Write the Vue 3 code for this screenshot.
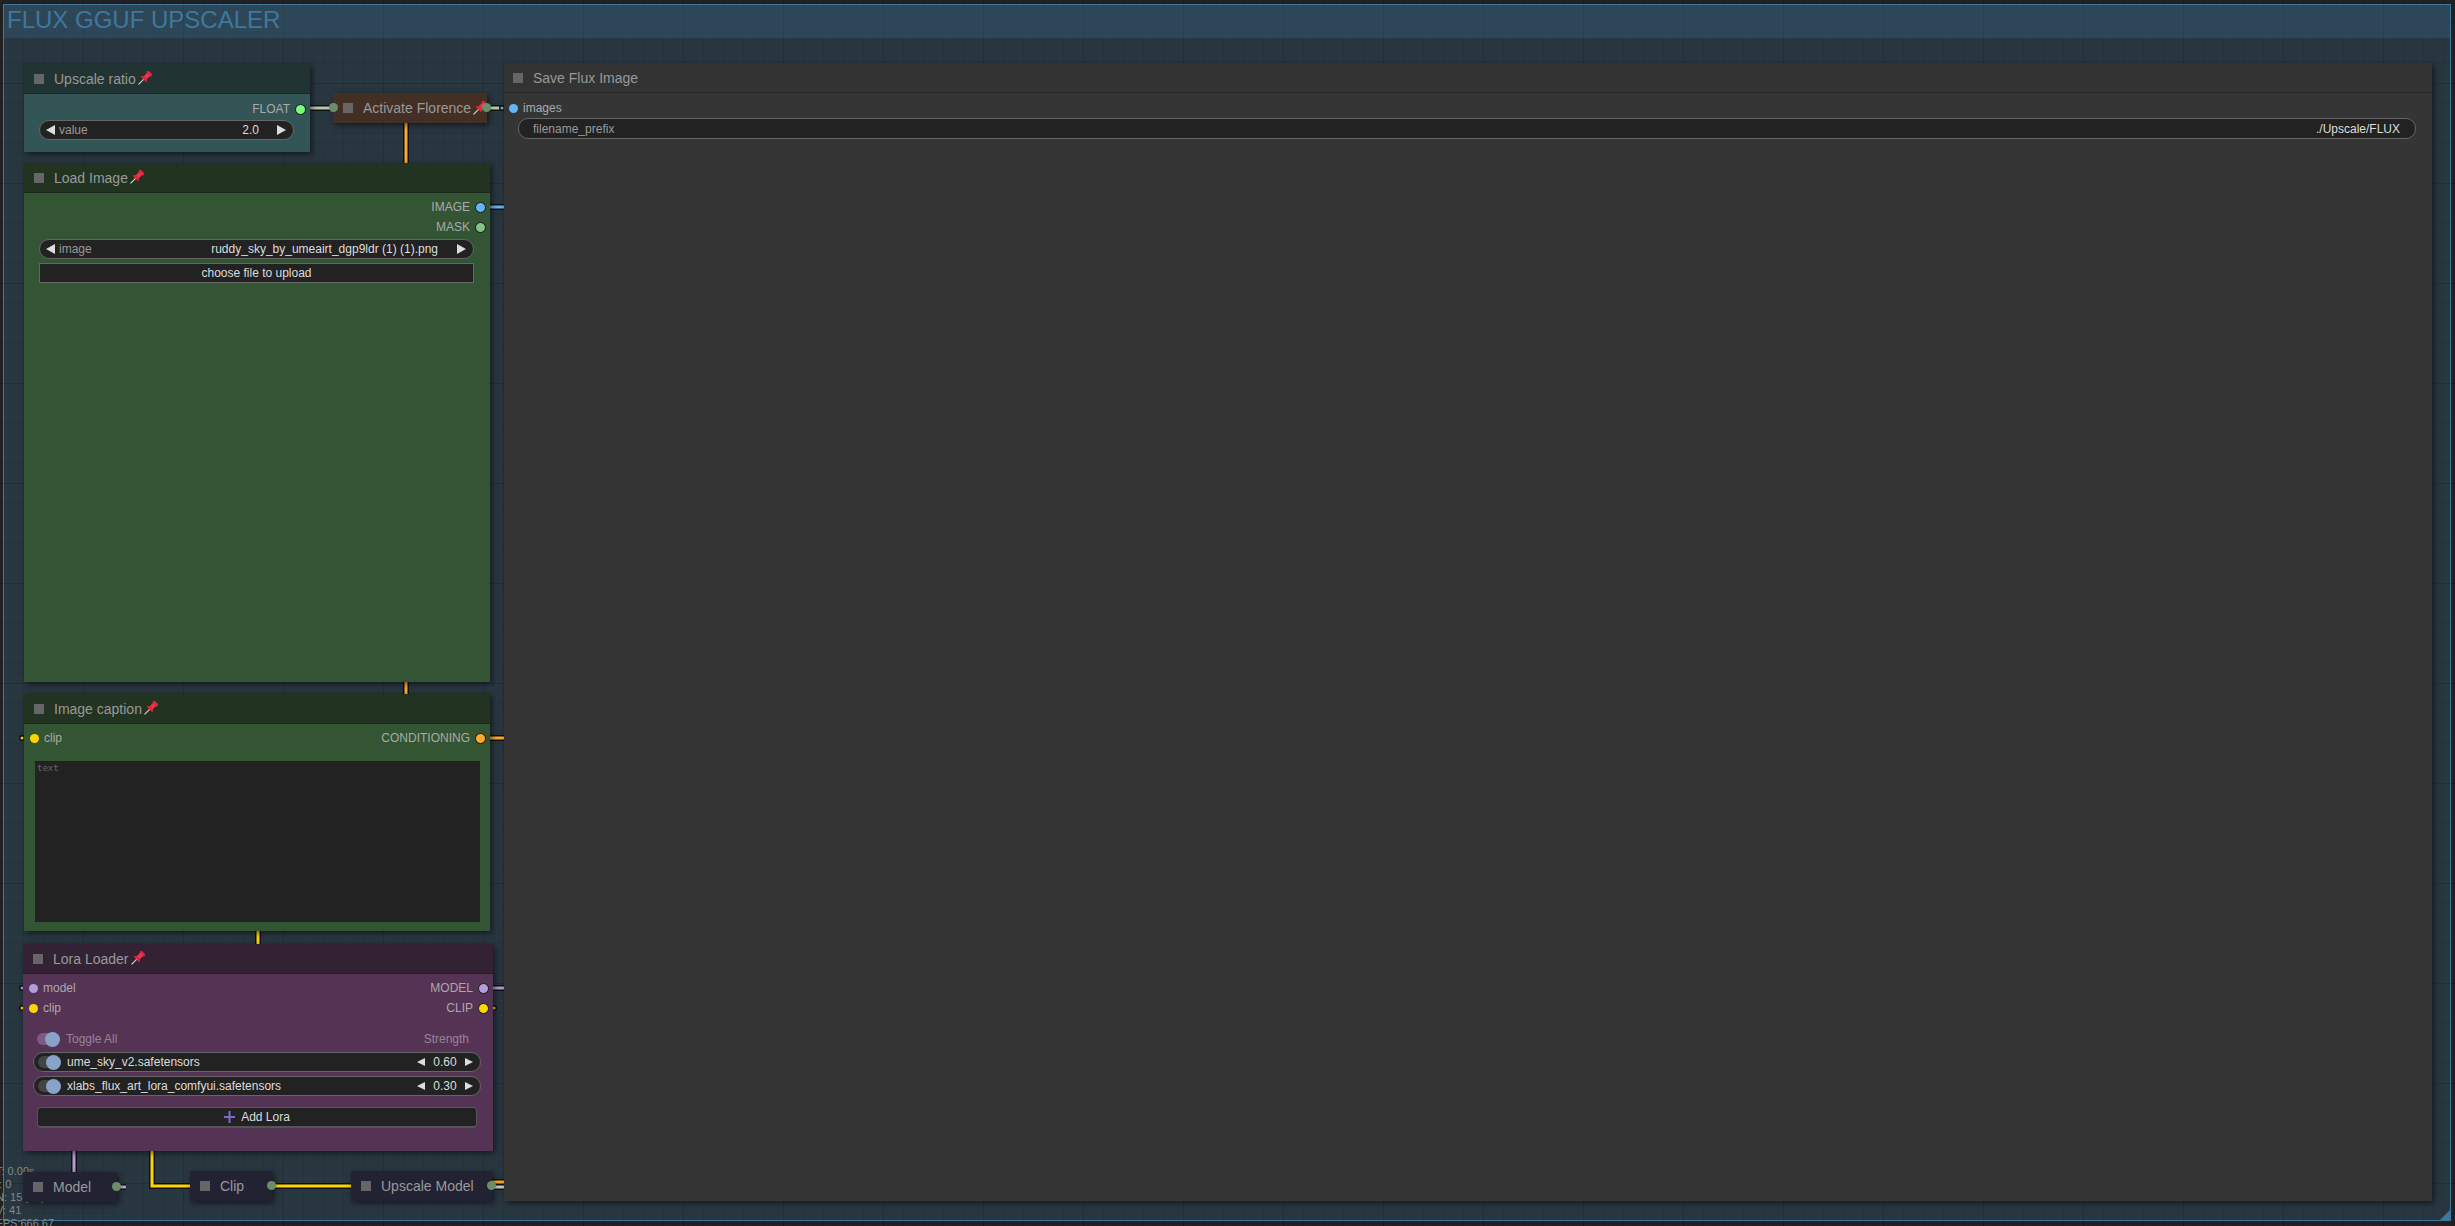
<script setup>
const loras = [
  { name: 'ume_sky_v2.safetensors', strength: '0.60' },
  { name: 'xlabs_flux_art_lora_comfyui.safetensors', strength: '0.30' }
]

// wire = [path, colour]
const wires = [
  ['M310 108H333', '#b9c7b0'],
  ['M487 108H504', '#b9c7b0'],
  ['M406 123V163', '#ffa931'],
  ['M406 682V694', '#ffa931'],
  ['M490 207H504', '#64b5f6'],
  ['M490 738H504', '#ffa931'],
  ['M258 931V944', '#ffd500'],
  ['M493 988H504', '#b39ddb'],
  ['M74 1151V1172', '#b39ddb'],
  ['M117 1187H126', '#b39ddb'],
  ['M152 1151V1186H190', '#ffd500'],
  ['M272 1186H351', '#ffd500'],
  ['M492 1182H504', '#ffa931'],
  ['M492 1187H504', '#c4cfc0']
]

// little wire ends that stick out from behind a node
const stubs = [
  [22, 738, '#ffd500'],
  [22, 988, '#b39ddb'],
  [22, 1008, '#ffd500'],
  [494, 1008, '#ffd500'],
  [502, 108, '#64b5f6']
]
</script>

<template>
  <div class="canvas">
    <div class="group">
      <div class="group-title">FLUX GGUF UPSCALER</div>
      <div class="group-grip"></div>
    </div>

    <div class="info">
      <div>T: 0.00s</div>
      <div>I: 0</div>
      <div>N: 15 [15]</div>
      <div>V: 41</div>
      <div>FPS:666.67</div>
    </div>

    <svg class="wires" width="2455" height="1226">
      <g v-for="w in wires" :key="w[0]" fill="none">
        <path :d="w[0]" stroke="#111" stroke-width="6" />
        <path :d="w[0]" :stroke="w[1]" stroke-width="3" />
      </g>
      <g v-for="s in stubs" :key="s[0] + '-' + s[1]">
        <circle :cx="s[0]" :cy="s[1]" r="3" fill="#111" />
        <circle :cx="s[0]" :cy="s[1]" r="1.5" :fill="s[2]" />
      </g>
    </svg>

    <!-- Upscale ratio -->
    <div class="node teal n-ratio">
      <div class="node-title">
        <span class="box"></span><span>Upscale ratio</span>
        <svg class="pin" viewBox="0 0 16 16"><use href="#pin" /></svg>
      </div>
      <div class="node-body">
        <div class="slot out"><span>FLOAT</span><i class="dot" style="--c: #77ff77"></i></div>
        <div class="widget w-ratio">
          <span class="arrow left"></span>
          <span class="w-label">value</span>
          <span class="w-value">2.0</span>
          <span class="arrow right"></span>
        </div>
      </div>
    </div>

    <!-- Activate Florence -->
    <div class="node mini brown n-florence">
      <span class="box"></span><span>Activate Florence</span>
      <svg class="pin" viewBox="0 0 16 16"><use href="#pin" /></svg>
      <i class="mini-dot at-left"></i>
      <i class="mini-dot at-right"></i>
    </div>

    <!-- Load Image -->
    <div class="node green n-load">
      <div class="node-title">
        <span class="box"></span><span>Load Image</span>
        <svg class="pin" viewBox="0 0 16 16"><use href="#pin" /></svg>
      </div>
      <div class="node-body">
        <div class="slot out"><span>IMAGE</span><i class="dot" style="--c: #64b5f6"></i></div>
        <div class="slot out"><span>MASK</span><i class="dot" style="--c: #81c784"></i></div>
        <div class="widget w-load">
          <span class="arrow left"></span>
          <span class="w-label">image</span>
          <span class="w-value">ruddy_sky_by_umeairt_dgp9ldr (1) (1).png</span>
          <span class="arrow right"></span>
        </div>
        <div class="upload">choose file to upload</div>
      </div>
    </div>

    <!-- Image caption -->
    <div class="node green n-caption">
      <div class="node-title">
        <span class="box"></span><span>Image caption</span>
        <svg class="pin" viewBox="0 0 16 16"><use href="#pin" /></svg>
      </div>
      <div class="node-body">
        <div class="slot both">
          <span class="side"><i class="dot in" style="--c: #ffd500"></i><span>clip</span></span>
          <span class="side"><span>CONDITIONING</span><i class="dot" style="--c: #ffa931"></i></span>
        </div>
        <textarea class="caption" placeholder="text"></textarea>
      </div>
    </div>

    <!-- Lora Loader -->
    <div class="node purple n-lora">
      <div class="node-title">
        <span class="box"></span><span>Lora Loader</span>
        <svg class="pin" viewBox="0 0 16 16"><use href="#pin" /></svg>
      </div>
      <div class="node-body">
        <div class="slot both">
          <span class="side"><i class="dot in" style="--c: #b39ddb"></i><span>model</span></span>
          <span class="side"><span>MODEL</span><i class="dot" style="--c: #b39ddb"></i></span>
        </div>
        <div class="slot both">
          <span class="side"><i class="dot in" style="--c: #ffd500"></i><span>clip</span></span>
          <span class="side"><span>CLIP</span><i class="dot" style="--c: #ffd500"></i></span>
        </div>
        <div class="lora-head">
          <span class="toggle dim"><i></i></span>
          <span>Toggle All</span>
          <span class="strength">Strength</span>
        </div>
        <div v-for="l in loras" :key="l.name" class="lora-row">
          <span class="toggle"><i></i></span>
          <span class="lora-name">{{ l.name }}</span>
          <span class="arrow left small"></span>
          <span class="lora-value">{{ l.strength }}</span>
          <span class="arrow right small"></span>
        </div>
        <div class="add-lora">
          <svg class="plus" viewBox="0 0 11 12"><path d="M4.5 0h2v5h4.500v2h-4.500v5h-2v-5h-4.500v-2h4.500z" /></svg>
          <span>Add Lora</span>
        </div>
      </div>
    </div>

    <div class="node mini navy n-model">
      <span class="box"></span><span>Model</span>
      <i class="mini-dot at-right"></i>
    </div>
    <div class="node mini navy n-clip">
      <span class="box"></span><span>Clip</span>
      <i class="mini-dot at-right"></i>
    </div>
    <div class="node mini navy n-upmodel">
      <span class="box"></span><span>Upscale Model</span>
      <i class="mini-dot at-right"></i>
    </div>

    <!-- Save Flux Image -->
    <div class="node grey n-save">
      <div class="node-title">
        <span class="box"></span><span>Save Flux Image</span>
      </div>
      <div class="node-body">
        <div class="slot">
          <span class="side"><i class="dot in" style="--c: #64b5f6"></i><span>images</span></span>
        </div>
        <div class="widget w-save">
          <span class="w-label">filename_prefix</span>
          <span class="w-value">./Upscale/FLUX</span>
        </div>
      </div>
    </div>

    <!-- shared pin icon -->
    <svg width="0" height="0" class="defs">
      <defs>
        <g id="pin" transform="rotate(45 8 8)">
          <rect x="7.400" y="9" width="1.200" height="8" fill="#d8d8d8" />
          <rect x="4.700" y="-1" width="6.600" height="3" rx="0.800" fill="#e8243c" />
          <rect x="5.700" y="1.500" width="4.600" height="5.500" fill="#f2314a" />
          <path d="M5.700 6.500h4.600l2.400 3h-9.400z" fill="#e8243c" />
        </g>
      </defs>
    </svg>
  </div>
</template>

<style>
html, body {
  margin: 0;
  overflow: hidden;
  background: #222;
}
</style>

<style scoped>
.canvas {
  position: relative;
  width: 2455px;
  height: 1226px;
  overflow: hidden;
  font-family: "Liberation Sans", Arial, sans-serif;
  background-color: #222;
  background-image:
    linear-gradient(to right, rgba(0, 0, 0, 0.22) 1px, transparent 1px),
    linear-gradient(to bottom, rgba(0, 0, 0, 0.22) 1px, transparent 1px),
    linear-gradient(to right, rgba(0, 0, 0, 0.12) 1px, transparent 1px),
    linear-gradient(to bottom, rgba(0, 0, 0, 0.12) 1px, transparent 1px);
  background-size: 100px 100px, 100px 100px, 10px 10px, 10px 10px;
  background-position: 83px 0, 0 83px, 3px 0, 0 3px;
}

.group {
  position: absolute;
  left: 3px;
  top: 4px;
  width: 2446px;
  height: 1215px;
  border: 1px solid #3f789e;
  background: rgba(63, 120, 158, 0.25);
}
.group-title {
  height: 33px;
  padding-left: 3px;
  background: rgba(63, 120, 158, 0.25);
  color: #3f789e;
  font-size: 24px;
  line-height: 30px;
}
.group-grip {
  position: absolute;
  right: 0;
  bottom: 0;
  width: 10px;
  height: 10px;
  background: #3f789e;
  clip-path: polygon(100% 0, 100% 100%, 0 100%);
}

.info {
  position: absolute;
  left: -4px;
  top: 1165px;
  color: #888;
  font-size: 11px;
  line-height: 13px;
  white-space: nowrap;
}

.wires {
  position: absolute;
  left: 0;
  top: 0;
}
.defs {
  position: absolute;
}

.node {
  position: absolute;
  box-shadow: 2px 2px 6px rgba(0, 0, 0, 0.55);
  color: #aaa;
  font-size: 12px;
  --title: #222;
  --body: #353535;
  background: var(--body);
}
.teal { --title: #223333; --body: #335555; }
.green { --title: #223322; --body: #335533; }
.purple { --title: #332233; --body: #553355; }
.grey { --title: #333333; --body: #353535; }
.brown { --body: #432f23; }
.navy { --body: #222233; }

.n-ratio { left: 24px; top: 64px; width: 286px; height: 88px; }
.n-load { left: 24px; top: 163px; width: 466px; height: 519px; }
.n-caption { left: 24px; top: 694px; width: 466px; height: 237px; }
.n-lora { left: 23px; top: 944px; width: 470px; height: 207px; }
.n-save { left: 504px; top: 63px; width: 1928px; height: 1138px; }
.n-florence { left: 333px; top: 93px; width: 154px; }
.n-model { left: 23px; top: 1172px; width: 94px; }
.n-clip { left: 190px; top: 1171px; width: 82px; }
.n-upmodel { left: 351px; top: 1171px; width: 141px; }

.node-title,
.mini {
  display: flex;
  align-items: center;
  height: 30px;
  padding-left: 10px;
  box-sizing: border-box;
  color: #999;
  font-size: 14px;
  white-space: nowrap;
}
.node-title {
  background: var(--title);
  border-bottom: 1px solid rgba(0, 0, 0, 0.2);
}
.n-save .node-title { padding-left: 9px; }
.box {
  flex: none;
  width: 10px;
  height: 10px;
  margin-right: 10px;
  background: #666;
}
.pin {
  flex: none;
  width: 15px;
  height: 15px;
  margin-left: 1px;
}
.mini-dot {
  position: absolute;
  top: 10px;
  width: 9px;
  height: 9px;
  border-radius: 50%;
  background: #6a8f68;
}
.at-left { left: -4px; }
.at-right { right: -4px; }

.node-body {
  display: flex;
  flex-direction: column;
  padding-top: 4px;
}
.n-ratio .node-body,
.n-save .node-body { padding-top: 5px; }
.n-save .slot { padding-left: 4px; }
.slot {
  display: flex;
  align-items: center;
  height: 20px;
  padding: 0 5px;
}
.slot.out {
  justify-content: flex-end;
  gap: 5px;
}
.slot.both {
  justify-content: space-between;
}
.side {
  display: flex;
  align-items: center;
  gap: 5px;
}
.dot {
  flex: none;
  width: 11px;
  height: 11px;
  margin: 0 -0.5px;
  box-sizing: border-box;
  border: 1px solid #151515;
  border-radius: 50%;
  background: var(--c);
}
.dot.in {
  width: 9px;
  height: 9px;
  margin: 0 0.5px;
  border: 0;
}

.widget {
  display: flex;
  align-items: center;
  height: 20px;
  box-sizing: border-box;
  margin-top: 2px;
  padding: 0 7px 0 6px;
  border: 1px solid #666;
  border-radius: 10px;
  background: #222;
  color: #999;
  white-space: nowrap;
}
.w-ratio { margin: 1px 16px 0 15px; }
.w-load { margin-left: 15px; margin-right: 16px; }
.w-save {
  margin: 0 16px 0 14px;
  height: 21px;
  padding: 0 15px 0 14px;
}
.w-label { margin-left: 4px; }
.w-save .w-label { margin-left: 0; }
.w-value {
  margin-left: auto;
  color: #ddd;
}
.arrow + .w-label + .w-value { margin-right: 19px; }
.w-ratio .w-label + .w-value { margin-right: 18px; }

.arrow {
  flex: none;
  width: 0;
  height: 0;
  border-top: 5.500px solid transparent;
  border-bottom: 5.500px solid transparent;
}
.arrow.left { border-right: 9.500px solid #ddd; }
.arrow.right { border-left: 9.500px solid #ddd; }
.arrow.small {
  border-top-width: 4.500px;
  border-bottom-width: 4.500px;
}
.arrow.left.small { border-right-width: 8px; }
.arrow.right.small { border-left-width: 8px; }

.upload {
  height: 20px;
  box-sizing: border-box;
  margin: 4px 16px 0 15px;
  border: 1px solid #666;
  background: #222;
  color: #ddd;
  text-align: center;
  line-height: 18px;
}

.caption {
  display: block;
  width: 445px;
  height: 161px;
  box-sizing: border-box;
  margin: 13px 0 0 11px;
  padding: 2px;
  border: 0;
  outline: 0;
  resize: none;
  background: #222;
  color: #ccc;
  font-family: "DejaVu Sans Mono", monospace;
  font-size: 9px;
}
.caption::placeholder {
  color: #666;
  opacity: 1;
}

.lora-head {
  display: flex;
  align-items: center;
  height: 20px;
  margin-top: 11px;
  padding: 0 24px 0 14px;
  color: rgba(255, 255, 255, 0.4);
}
.strength { margin-left: auto; }
.toggle {
  position: relative;
  flex: none;
  width: 22px;
  height: 12px;
  margin-right: 7px;
  border-radius: 6px;
  background: #444;
}
.toggle.dim { background: #7b5b7f; }
.toggle i {
  position: absolute;
  right: -1px;
  top: -1.500px;
  width: 15px;
  height: 15px;
  border-radius: 50%;
  background: #89a2c8;
}
.lora-row {
  display: flex;
  align-items: center;
  height: 20px;
  box-sizing: border-box;
  margin: 3px 12px 1px 10px;
  padding: 0 7px 0 4px;
  border: 1px solid #666;
  border-radius: 10px;
  background: #222;
  color: #ddd;
}
.lora-row .lora-name { margin-right: auto; }
.lora-value {
  width: 40px;
  text-align: center;
}
.add-lora {
  display: flex;
  align-items: center;
  justify-content: center;
  gap: 6px;
  height: 21px;
  box-sizing: border-box;
  margin: 10px 16px 0 14px;
  border: 1px solid #555;
  border-bottom-width: 2px;
  border-radius: 4px;
  background: #222;
  color: #ddd;
}
.plus {
  width: 11px;
  height: 12px;
  fill: #7d68d0;
}
</style>
